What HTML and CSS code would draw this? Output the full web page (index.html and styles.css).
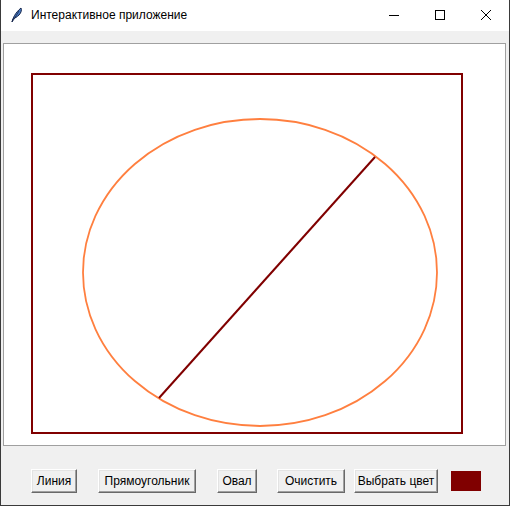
FILE: index.html
```html
<!DOCTYPE html>
<html lang="ru">
<head>
<meta charset="utf-8">
<title>Интерактивное приложение</title>
<link rel="stylesheet" href="styles.css">
</head>
<body>
<div class="window">
  <div class="titlebar">
    <svg class="app-icon" width="16" height="16" viewBox="0 0 16 16">
      <path d="M3 15 C4 11 6 6 12 1 C13 3 12 6 10 8 C8 10 6 11 4 12 Z" fill="#4a7cc4" stroke="#14244a" stroke-width="1"/>
      <path d="M3.5 14.5 L10 4" stroke="#14244a" stroke-width="0.8"/>
    </svg>
    <span class="title">Интерактивное приложение</span>
    <div class="controls">
      <div class="ctl">
        <svg width="12" height="12" viewBox="0 0 12 12"><path d="M1 6.5 H11" stroke="#000" stroke-width="1"/></svg>
      </div>
      <div class="ctl">
        <svg width="12" height="12" viewBox="0 0 12 12"><rect x="1.5" y="1.5" width="9" height="9" fill="none" stroke="#000" stroke-width="1"/></svg>
      </div>
      <div class="ctl">
        <svg width="12" height="12" viewBox="0 0 12 12"><path d="M1 1 L11 11 M11 1 L1 11" stroke="#000" stroke-width="1"/></svg>
      </div>
    </div>
  </div>
  <div class="content">
    <div class="canvas">
      <svg class="drawing" width="501" height="401" viewBox="4 44 501 401">
        <rect x="32" y="74" width="430" height="359" fill="none" stroke="#800000" stroke-width="2" shape-rendering="crispEdges"/>
        <ellipse cx="260" cy="272.5" rx="177" ry="153.5" fill="none" stroke="#ff7f3f" stroke-width="1.8"/>
        <line x1="159" y1="398" x2="375" y2="157" stroke="#800000" stroke-width="2"/>
      </svg>
    </div>
    <div class="toolbar">
      <button class="btn btn-line">Линия</button>
      <button class="btn btn-rect">Прямоугольник</button>
      <button class="btn btn-oval">Овал</button>
      <button class="btn btn-clear">Очистить</button>
      <button class="btn btn-color">Выбрать цвет</button>
      <div class="swatch"></div>
    </div>
  </div>
</div>
</body>
</html>
```

FILE: styles.css
```css
html, body {
  margin: 0;
  padding: 0;
  background: #f0f0f0;
}
body {
  width: 510px;
  height: 506px;
  overflow: hidden;
  font-family: "Liberation Sans", Arial, sans-serif;
  font-size: 12px;
  color: #000;
}
.window {
  box-sizing: border-box;
  width: 510px;
  height: 506px;
  border-left: 1px solid #3a3a3a;
  border-right: 1px solid #3a3a3a;
  border-bottom: 1px solid #3a3a3a;
  display: flex;
  flex-direction: column;
  background: #f0f0f0;
}
.titlebar {
  height: 31px;
  background: #fff;
  display: flex;
  align-items: center;
  flex-shrink: 0;
}
.app-icon {
  margin-left: 8px;
  margin-top: -1px;
}
.title {
  margin-left: 6px;
  font-size: 12px;
  margin-top: -1px;
}
.controls {
  margin-left: auto;
  display: flex;
  height: 31px;
}
.ctl {
  width: 46px;
  height: 30px;
  display: flex;
  align-items: center;
  justify-content: center;
}
.content {
  flex: 1;
  display: flex;
  flex-direction: column;
  padding: 12px 3px 0 2px;
}
.canvas {
  width: 503px;
  height: 403px;
  box-sizing: border-box;
  border: 1px solid #a0a0a0;
  background: #fff;
  overflow: hidden;
}
.drawing {
  display: block;
}
.toolbar {
  display: flex;
  align-items: center;
  height: 24px;
  margin-top: 23px;
  padding-left: 28px;
}
.btn {
  box-sizing: border-box;
  height: 24px;
  padding: 0;
  font-family: "Liberation Sans", Arial, sans-serif;
  font-size: 12px;
  color: #000;
  background: #f0f0f0;
  border: 1px solid;
  border-color: #fff #696969 #696969 #fff;
  box-shadow: inset -1px -1px 0 #a0a0a0, inset 1px 1px 0 #e3e3e3;
  text-align: center;
  line-height: 20px;
}
.btn-line { width: 46px; }
.btn-rect { width: 98px; margin-left: 21px; }
.btn-oval { width: 40px; margin-left: 21px; }
.btn-clear { width: 68px; margin-left: 20px; }
.btn-color { width: 84px; margin-left: 9px; }
.swatch {
  width: 30px;
  height: 20px;
  background: #800000;
  margin-left: 13px;
}
```
